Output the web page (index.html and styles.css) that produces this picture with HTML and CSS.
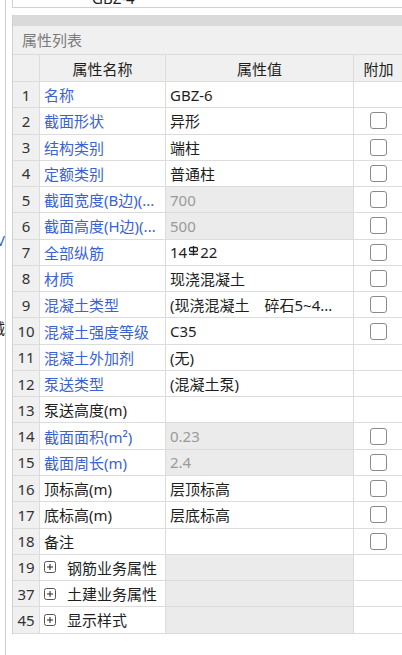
FILE: index.html
```html
<!DOCTYPE html>
<html lang="zh-CN">
<head>
<meta charset="utf-8">
<title>属性列表</title>
<link rel="stylesheet" href="styles.css">
</head>
<body>
<div class="page">
  <div class="edge">
    <div class="edge-line l1">V</div>
    <div class="edge-line l2">械</div>
  </div>
  <div class="main">
    <div class="topbox"><div class="topname">GBZ-4</div></div>
    <div class="panel">
      <div class="bar"></div>
      <div class="title">属性列表</div>
      <div class="grid">
        <div class="row head">
          <div class="c num"></div><div class="c name center">属性名称</div><div class="c val center">属性值</div><div class="c ext">附加</div>
        </div>
        <div class="row"><div class="c num">1</div><div class="c name blue">名称</div><div class="c val">GBZ-6</div><div class="c ext"></div></div>
        <div class="row"><div class="c num">2</div><div class="c name blue">截面形状</div><div class="c val">异形</div><div class="c ext"><span class="cb"></span></div></div>
        <div class="row"><div class="c num">3</div><div class="c name blue">结构类别</div><div class="c val">端柱</div><div class="c ext"><span class="cb"></span></div></div>
        <div class="row"><div class="c num">4</div><div class="c name blue">定额类别</div><div class="c val">普通柱</div><div class="c ext"><span class="cb"></span></div></div>
        <div class="row"><div class="c num">5</div><div class="c name blue">截面宽度(B边)(...</div><div class="c val dis">700</div><div class="c ext"><span class="cb"></span></div></div>
        <div class="row"><div class="c num">6</div><div class="c name blue">截面高度(H边)(...</div><div class="c val dis">500</div><div class="c ext"><span class="cb"></span></div></div>
        <div class="row"><div class="c num">7</div><div class="c name blue">全部纵筋</div><div class="c val">14<svg class="rebar" width="11" height="10" viewBox="0 0 11 10"><rect x="1.5" y="1.5" width="8" height="4" rx="1.5" fill="none" stroke="#222" stroke-width="1.3"/><line x1="5.5" y1="0" x2="5.5" y2="9.5" stroke="#222" stroke-width="1.3"/><line x1="1" y1="8.3" x2="10" y2="8.3" stroke="#222" stroke-width="1.3"/></svg>22</div><div class="c ext"><span class="cb"></span></div></div>
        <div class="row"><div class="c num">8</div><div class="c name blue">材质</div><div class="c val">现浇混凝土</div><div class="c ext"><span class="cb"></span></div></div>
        <div class="row"><div class="c num">9</div><div class="c name blue">混凝土类型</div><div class="c val">(现浇混凝土　碎石5~4...</div><div class="c ext"><span class="cb"></span></div></div>
        <div class="row"><div class="c num">10</div><div class="c name blue">混凝土强度等级</div><div class="c val">C35</div><div class="c ext"><span class="cb"></span></div></div>
        <div class="row"><div class="c num">11</div><div class="c name blue">混凝土外加剂</div><div class="c val">(无)</div><div class="c ext"></div></div>
        <div class="row"><div class="c num">12</div><div class="c name blue">泵送类型</div><div class="c val">(混凝土泵)</div><div class="c ext"></div></div>
        <div class="row"><div class="c num">13</div><div class="c name">泵送高度(m)</div><div class="c val"></div><div class="c ext"></div></div>
        <div class="row"><div class="c num">14</div><div class="c name blue">截面面积(m²)</div><div class="c val dis">0.23</div><div class="c ext"><span class="cb"></span></div></div>
        <div class="row"><div class="c num">15</div><div class="c name blue">截面周长(m)</div><div class="c val dis">2.4</div><div class="c ext"><span class="cb"></span></div></div>
        <div class="row"><div class="c num">16</div><div class="c name">顶标高(m)</div><div class="c val">层顶标高</div><div class="c ext"><span class="cb"></span></div></div>
        <div class="row"><div class="c num">17</div><div class="c name">底标高(m)</div><div class="c val">层底标高</div><div class="c ext"><span class="cb"></span></div></div>
        <div class="row"><div class="c num">18</div><div class="c name">备注</div><div class="c val"></div><div class="c ext"><span class="cb"></span></div></div>
        <div class="row"><div class="c num">19</div><div class="c name"><svg class="plus" width="12" height="12" viewBox="0 0 12 12"><rect x="0.5" y="0.5" width="11" height="11" rx="2" fill="#fff" stroke="#555"/><line x1="3" y1="6" x2="9" y2="6" stroke="#222"/><line x1="6" y1="3" x2="6" y2="9" stroke="#222"/></svg><span class="gtext">钢筋业务属性</span></div><div class="c val grp"></div><div class="c ext"></div></div>
        <div class="row"><div class="c num">37</div><div class="c name"><svg class="plus" width="12" height="12" viewBox="0 0 12 12"><rect x="0.5" y="0.5" width="11" height="11" rx="2" fill="#fff" stroke="#555"/><line x1="3" y1="6" x2="9" y2="6" stroke="#222"/><line x1="6" y1="3" x2="6" y2="9" stroke="#222"/></svg><span class="gtext">土建业务属性</span></div><div class="c val grp"></div><div class="c ext"></div></div>
        <div class="row"><div class="c num">45</div><div class="c name"><svg class="plus" width="12" height="12" viewBox="0 0 12 12"><rect x="0.5" y="0.5" width="11" height="11" rx="2" fill="#fff" stroke="#555"/><line x1="3" y1="6" x2="9" y2="6" stroke="#222"/><line x1="6" y1="3" x2="6" y2="9" stroke="#222"/></svg><span class="gtext">显示样式</span></div><div class="c val grp"></div><div class="c ext"></div></div>
      </div>
    </div>
  </div>
</div>
</body>
</html>
```

FILE: styles.css
```css
* { box-sizing: border-box; }
html, body { margin: 0; padding: 0; background: #fff; }
body {
  width: 402px;
  height: 655px;
  overflow: hidden;
  font-family: "Noto Sans", "Noto Sans CJK SC", sans-serif;
  font-size: 15px;
  color: #1e1e1e;
}
.page { display: flex; height: 655px; }
.edge {
  width: 6px;
  flex: none;
  border-right: 1px solid #cdcdcd;
  overflow: hidden;
}
.edge-line {
  display: flex;
  justify-content: flex-end;
  width: 5px;
  white-space: nowrap;
  line-height: 15px;
}
.l1 { margin-top: 233px; color: #3b62d3; }
.l2 { margin-top: 73px; }

.main { flex: 1; min-width: 0; margin-left: 6px; overflow: hidden; }
.topbox {
  height: 8px;
  border-left: 1px solid #d0d0d0;
  border-bottom: 1px solid #d0d0d0;
  overflow: hidden;
  padding-left: 79px;
}
.topname { margin-top: -9px; line-height: 15px; }

.panel { margin-top: 7px; border-left: 1px solid #d0d0d0; }
.bar { height: 11px; background: #dadada; }
.title {
  height: 28px;
  line-height: 28px;
  background: #f0f0f0;
  color: #7b7b7b;
  padding-left: 9px;
}
.row {
  display: grid;
  grid-template-columns: 27px 126px 188px 49px;
  height: 26.27px;
}
.row.head { height: 28px; border-top: 1px solid #dcdcdc; background: #f0f0f0; }
.c {
  display: flex;
  align-items: center;
  padding-left: 4px;
  border-right: 1px solid #dcdcdc;
  border-bottom: 1px solid #dcdcdc;
  overflow: hidden;
  white-space: nowrap;
  background: #fff;
}
.head .c { background: #f0f0f0; }
.c.num { justify-content: center; padding-left: 0; background: #f0f0f0; color: #333; }
.c.center { justify-content: center; padding-left: 0; }
.c.ext { justify-content: center; padding-left: 0; border-right: none; }
.blue { color: #3a62d4; }
.c.dis { background: #ebebeb; color: #9a9a9a; }
.c.grp { background: #ebebeb; }
.cb {
  width: 17px;
  height: 17px;
  border: 1.5px solid #8a8a8a;
  border-radius: 3px;
  background: #fff;
}
.rebar { margin: 0 1px; align-self: flex-start; margin-top: 6px; }
.plus { flex: none; }
.gtext { margin-left: 11px; }
```
